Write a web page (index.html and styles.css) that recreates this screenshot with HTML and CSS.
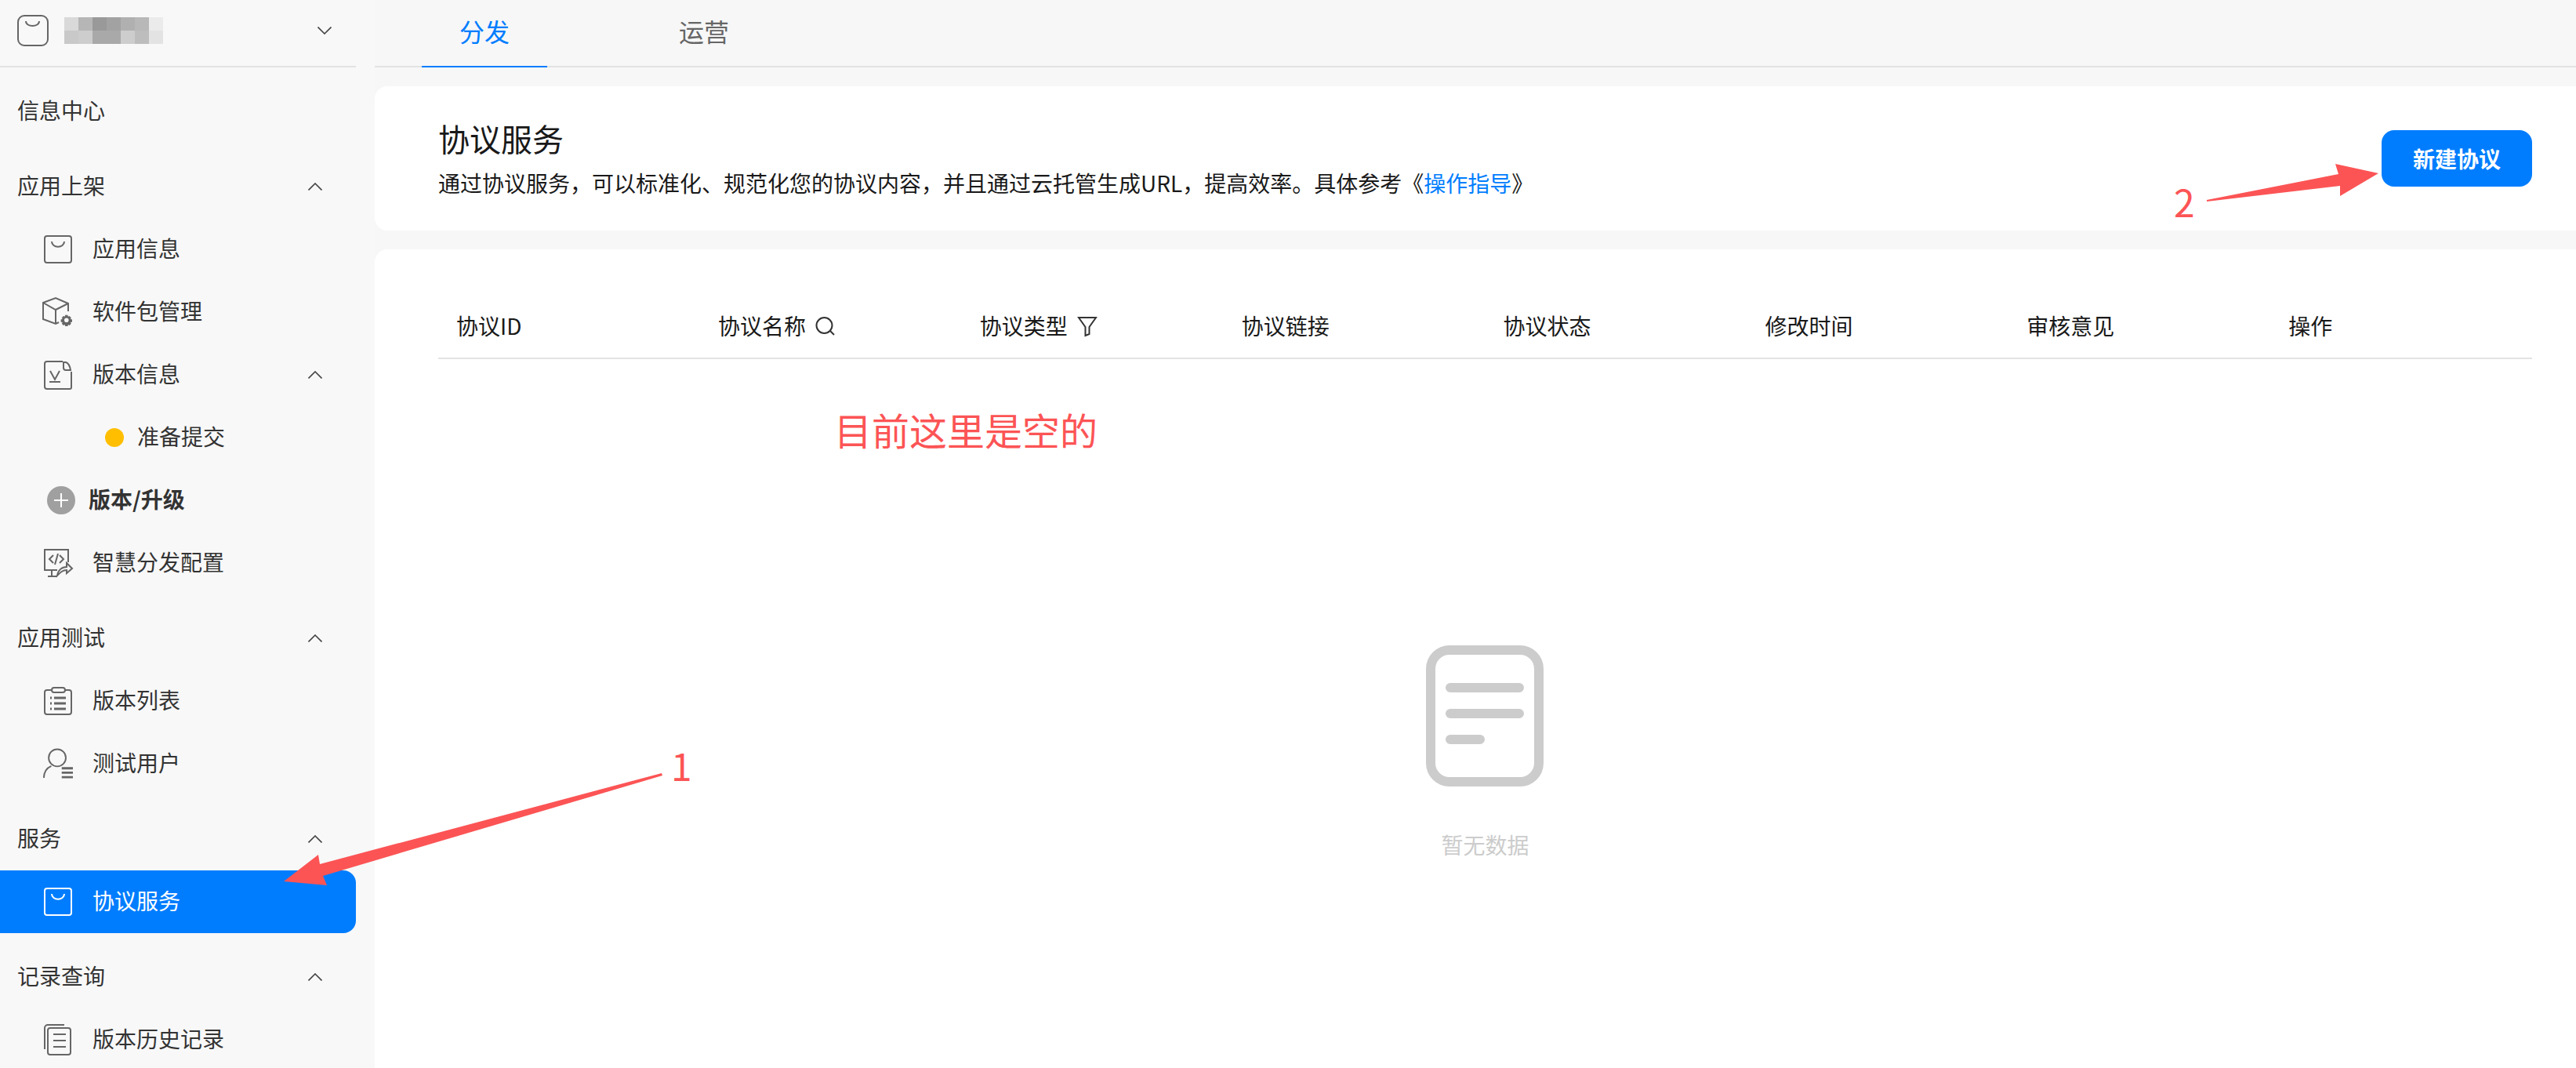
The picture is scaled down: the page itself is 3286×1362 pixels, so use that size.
FILE: index.html
```html
<!DOCTYPE html>
<html lang="zh-CN">
<head>
<meta charset="utf-8">
<title>协议服务</title>
<link rel="stylesheet" href="styles.css">
</head>
<body>
<div class="app">
  <aside class="sidebar">
    <div class="side-head">
      <svg class="logo" viewBox="0 0 40 40"><rect x="1" y="1" width="38" height="38" rx="8"/><path d="M11 8c0 8 17 8 17 0"/></svg>
      <div class="mosaic">
        <i class="m1"></i><i class="m2"></i><i class="m3"></i><i class="m4"></i><i class="m5"></i><i class="m6"></i><i class="m7"></i>
        <i class="m8"></i><i class="m9"></i><i class="m10"></i><i class="m10"></i><i class="m9"></i><i class="m11"></i><i class="m12"></i>
      </div>
      <svg class="chev head-chev" viewBox="0 0 18 10"><path d="M0.5 0.5 9 9l8.5-8.5"/></svg>
    </div>
    <nav class="nav">
      <div class="group"><div class="row sec"><span>信息中心</span></div></div>
      <div class="group">
        <div class="row sec"><span>应用上架</span><svg class="chev" viewBox="0 0 18 10"><path d="M0.5 9.500 9 1l8.500 8.500"/></svg></div>
        <div class="row sub"><svg class="ico" viewBox="0 0 36 36"><rect x="1" y="1" width="34" height="34" rx="3"/><path d="M10 8c0 9 16 9 16 0"/></svg><span>应用信息</span></div>
        <div class="row sub"><svg class="ico ico-lg" viewBox="0 0 40 38"><path d="M33 18V8L17 1 1 7v21l16 6 4-2"/><path d="M1 7l16 9 16-8M17 16v18"/><path class="gear" fill-rule="evenodd" d="M29 21h4l.6 2.400 2.200-.9 2.700 2.700-1.200 2.100 2.700.7v4l-2.700.7 1.200 2.100-2.700 2.700-2.200-1.200-.6 2.400h-4l-.6-2.400-2.200 1.200-2.700-2.700 1.200-2.100-2.700-.7v-4l2.700-.7-1.200-2.100 2.700-2.700 2.200.9zM31 25.500a3.500 3.500 0 1 0 0 7 3.500 3.500 0 0 0 0-7z" transform="translate(6 6) scale(.8)"/></svg><span>软件包管理</span></div>
        <div class="row sub"><svg class="ico" viewBox="0 0 36 36"><path d="M24 1H4a3 3 0 0 0-3 3v29a3 3 0 0 0 3 3h29a2 2 0 0 0 2-2V14"/><path d="M25 2h3c3 1 5 4 6 10h-6a3 3 0 0 1-3-3z"/><path d="M8 13l6 11 6-11M7 27h14"/></svg><span>版本信息</span><svg class="chev" viewBox="0 0 18 10"><path d="M0.500 9.500 9 1l8.500 8.500"/></svg></div>
        <div class="row state"><i class="dot"></i><span>准备提交</span></div>
        <div class="row plus"><i class="plus-ico"></i><span>版本/升级</span></div>
        <div class="row sub"><svg class="ico" viewBox="0 0 36 36"><path d="M31 17V1H1v26h16M10 27v8M5 35h12"/><path d="M12 8l-5 5 5 5M20 8l5 5-5 5M18 6l-4 14"/><path d="M17 34c1-7 6-11 12-11v-5l7 7-7 6v-4c-5 0-8 3-12 7z"/></svg><span>智慧分发配置</span></div>
      </div>
      <div class="group">
        <div class="row sec"><span>应用测试</span><svg class="chev" viewBox="0 0 18 10"><path d="M0.500 9.500 9 1l8.500 8.500"/></svg></div>
        <div class="row sub"><svg class="ico" viewBox="0 0 36 36"><path d="M9 4H4a3 3 0 0 0-3 3v25a3 3 0 0 0 3 3h28a3 3 0 0 0 3-3V7a3 3 0 0 0-3-3h-5"/><rect x="10" y="1" width="17" height="6" rx="3"/><path class="thick" d="M8 14h2M8 21h2M8 28h2M13 14h15M13 21h15M13 28h15"/></svg><span>版本列表</span></div>
        <div class="row sub"><svg class="ico ico-lg" viewBox="0 0 40 40"><circle cx="19" cy="12" r="11.500"/><path d="M1 39c0-8 3-13 10-16"/><path class="thick" d="M25 26h15M25 32h15M25 38h15"/></svg><span>测试用户</span></div>
      </div>
      <div class="group">
        <div class="row sec"><span>服务</span><svg class="chev" viewBox="0 0 18 10"><path d="M0.500 9.500 9 1l8.500 8.500"/></svg></div>
        <div class="row sub active"><svg class="ico" viewBox="0 0 36 36"><rect x="1" y="1" width="34" height="34" rx="3"/><path d="M10 8c0 9 16 9 16 0"/></svg><span>协议服务</span></div>
      </div>
      <div class="group">
        <div class="row sec"><span>记录查询</span><svg class="chev" viewBox="0 0 18 10"><path d="M0.500 9.500 9 1l8.500 8.500"/></svg></div>
        <div class="row sub"><svg class="ico ico-tall" viewBox="0 0 36 40"><path d="M26 1H5a4 4 0 0 0-4 4v27"/><rect x="5" y="5" width="29" height="34" rx="3"/><path d="M12 13h16M12 21h16M12 29h16"/></svg><span>版本历史记录</span></div>
      </div>
    </nav>
  </aside>
  <main class="main">
    <div class="tabs">
      <div class="tab on">分发</div>
      <div class="tab">运营</div>
    </div>
    <section class="card intro">
      <div class="intro-text">
        <h1 class="title">协议服务</h1>
        <p class="desc">通过协议服务，可以标准化、规范化您的协议内容，并且通过云托管生成URL，提高效率。具体参考《<a class="link">操作指导</a>》</p>
      </div>
      <button class="btn">新建协议</button>
    </section>
    <section class="card list">
      <div class="thead">
        <div class="th">协议ID</div>
        <div class="th">协议名称<svg class="th-ico" viewBox="0 0 24 24"><circle cx="10.500" cy="11" r="10"/><path d="M18 18l5 5"/></svg></div>
        <div class="th">协议类型<svg class="th-ico" viewBox="0 0 24 24"><path d="M1 1h22l-8.500 12v9l-5 2V13z"/></svg></div>
        <div class="th">协议链接</div>
        <div class="th">协议状态</div>
        <div class="th">修改时间</div>
        <div class="th">审核意见</div>
        <div class="th">操作</div>
      </div>
      <div class="empty">
        <svg class="empty-ico" viewBox="0 0 150 180"><rect x="6" y="6" width="138" height="168" rx="24"/><path d="M31 54h88M31 87h88M31 120h38"/></svg>
        <div class="empty-text">暂无数据</div>
      </div>
    </section>
  </main>
</div>
<div class="note note-empty">目前这里是空的</div>
<div class="note note-one">1</div>
<div class="note note-two">2</div>
<svg class="arrows" viewBox="0 0 3286 1362">
  <polygon points="844,986 408,1102 406,1090 362,1124 417,1129 412,1117 845,989"/>
  <polygon points="2815,255 2983,222 2979,209 3034,221 2985,250 2985,237 2815,257"/>
</svg>
</body>
</html>
```
FILE: styles.css
```css
* { box-sizing: border-box; }
html, body { margin: 0; height: 100%; overflow: hidden; }
body {
  position: relative;
  width: 3286px;
  height: 1362px;
  background: #f7f7f7;
  font-family: "Noto Sans CJK SC", "Noto Sans", sans-serif;
  font-size: 28px;
  color: #191919;
}
svg { display: block; fill: none; }
.app { display: flex; height: 1362px; }

.sidebar { width: 478px; flex: none; background: #f8f8f8; overflow: hidden; }
.side-head {
  width: 454px; height: 86px;
  border-bottom: 2px solid #e3e3e3;
  display: flex; align-items: center;
  padding: 0 0 6px 22px;
}
.logo { width: 40px; height: 40px; stroke: #666; stroke-width: 2; margin-right: 20px; }
.mosaic { display: grid; grid-template-columns: repeat(7, 18px); grid-auto-rows: 17px; }
.mosaic i { display: block; }
.m1 { background: #d9d9d9; }
.m2 { background: #b6b6b6; }
.m3 { background: #999; }
.m4 { background: #a2a2a2; }
.m5 { background: #b0b0b0; }
.m6 { background: #b8b8b8; }
.m7 { background: #ebebeb; }
.m8 { background: #c9c9c9; }
.m9 { background: #cdcdcd; }
.m10 { background: #a9a9a9; }
.m11 { background: #bdbdbd; }
.m12 { background: #e3e3e3; }
.chev { width: 18px; height: 10px; stroke: #444; stroke-width: 1.6; margin-left: auto; flex: none; }
.head-chev { margin-right: 31px; }

.nav { width: 454px; padding-top: 16px; display: flex; flex-direction: column; gap: 16px; }
.row { height: 80px; display: flex; align-items: center; color: #333; line-height: 40px; white-space: nowrap; }
.row span { margin-bottom: 4px; }
.sec { padding: 0 43px 0 22px; }
.sub { padding: 0 43px 0 56px; }
.ico { width: 36px; height: 36px; stroke: #666; stroke-width: 2; margin-right: 26px; flex: none; overflow: visible; }
.ico-lg { width: 40px; height: 38px; margin-left: -2px; margin-right: 24px; }
.ico-tall { height: 40px; }
.gear { fill: #666; stroke: none; }
.thick { stroke-width: 3; }
.active { background: #007dff; color: #fff; border-radius: 0 16px 16px 0; }
.active .ico { stroke: #fff; }
.state { padding-left: 134px; }
.dot { width: 24px; height: 24px; border-radius: 50%; background: #ffbf00; margin-right: 17px; }
.plus { padding-left: 60px; font-weight: 700; }
.plus-ico {
  width: 36px; height: 36px; border-radius: 50%; margin-right: 17px;
  background: #a0a0a0;
  position: relative;
}
.plus-ico::before, .plus-ico::after { content: ""; position: absolute; background: #fff; }
.plus-ico::before { left: 9px; top: 17px; width: 18px; height: 2px; }
.plus-ico::after { left: 17px; top: 9px; width: 2px; height: 18px; }

.main { flex: 1; min-width: 0; display: flex; flex-direction: column; }
.tabs { height: 86px; border-bottom: 2px solid #e3e3e3; display: flex; gap: 120px; padding-left: 60px; margin-bottom: 24px; }
.tab { width: 160px; height: 86px; line-height: 78px; text-align: center; font-size: 32px; color: #666; }
.tab.on { color: #007dff; border-bottom: 2px solid #007dff; }
.card { background: #fff; border-radius: 16px 0 0 16px; }
.intro {
  height: 184px; margin-bottom: 24px;
  padding: 0 56px 0 81px;
  display: flex; align-items: center; justify-content: space-between;
}
.intro-text { margin-bottom: 4px; }
.title { margin: 0 0 9px; font-size: 40px; font-weight: 400; line-height: 56px; color: #191919; }
.desc { margin: 0; line-height: 40px; color: #191919; }
.link { color: #007dff; }
.btn {
  width: 192px; height: 72px; border: 0; border-radius: 16px;
  background: #007dff; color: #fff; font: 700 28px "Noto Sans CJK SC", sans-serif;
}
.list { flex: 1; padding: 0 56px 0 81px; border-radius: 16px 0 0 0; }
.thead {
  height: 140px; padding-top: 58px;
  display: grid; grid-template-columns: repeat(8, 1fr);
  border-bottom: 2px solid #e3e3e3;
}
.th { padding-left: 23px; display: flex; align-items: flex-start; line-height: 78px; white-space: nowrap; color: #191919; }
.th-ico { width: 24px; height: 24px; stroke: #333; stroke-width: 2; margin: 28px 0 0 13px; flex: none; overflow: visible; }
.empty { display: flex; flex-direction: column; align-items: center; padding-top: 365px; }
.empty-ico { width: 150px; height: 180px; stroke: #ccc; stroke-width: 12; stroke-linecap: round; margin-right: 2px; }
.empty-text { margin-top: 54px; line-height: 40px; color: #ccc; }

.note { position: absolute; color: #fc5455; font-size: 48px; line-height: 60px; white-space: nowrap; }
.note-empty { left: 1064px; top: 517px; }
.note-one { left: 856px; top: 945px; }
.note-two { left: 2773px; top: 226px; }
.arrows { position: absolute; left: 0; top: 0; width: 3286px; height: 1362px; fill: #fc5455; pointer-events: none; }
```
